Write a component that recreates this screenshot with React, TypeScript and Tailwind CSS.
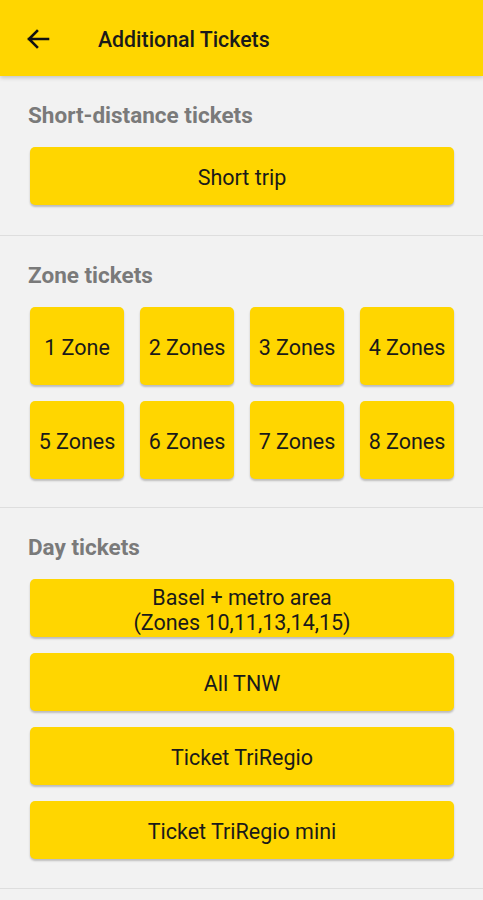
import React from "react";

const btn =
  "flex items-center justify-center bg-[#ffd600] rounded-[5px] shadow-[0_2px_2px_rgba(0,0,0,0.22)] text-[21.5px] text-[#1a1a1a] leading-[24px] pt-[3px]";

function Title({ children }: { children: React.ReactNode }) {
  return (
    <div className="pl-[28px] h-[24px] leading-[24px] text-[22.5px] font-bold text-[#7a7a7a] mb-[20px]">
      {children}
    </div>
  );
}

export default function App() {
  const zones = ["1 Zone", "2 Zones", "3 Zones", "4 Zones", "5 Zones", "6 Zones", "7 Zones", "8 Zones"];
  return (
    <div className="w-[483px] h-[900px] bg-[#f2f2f2] overflow-hidden" style={{ fontFamily: "Roboto, 'Noto Sans', sans-serif" }}>
      <div className="relative z-10 h-[76px] bg-[#ffd600] flex items-center shadow-[0_2px_4px_rgba(0,0,0,0.18)]">
        <svg className="ml-[26px] mt-[2px]" width="24" height="20" viewBox="0 0 24 20">
          <path d="M22 10H3M11 2L3 10l8 8" fill="none" stroke="#111" strokeWidth="2.6" strokeLinecap="square" strokeLinejoin="miter" />
        </svg>
        <div className="ml-[48px] mt-[3px] text-[21.3px] font-medium text-[#1a1a1a]">Additional Tickets</div>
      </div>

      <div className="pt-[27px] pb-[30px] border-b border-[#dedede]">
        <Title>Short-distance tickets</Title>
        <div className="ml-[30px] mr-[29px]">
          <div className={`${btn} h-[58px]`}>Short trip</div>
        </div>
      </div>

      <div className="pt-[27px] pb-[28px] border-b border-[#dedede]">
        <Title>Zone tickets</Title>
        <div className="ml-[30px] mr-[29px] grid grid-cols-4 gap-4">
          {zones.map((z) => (
            <div key={z} className={`${btn} h-[78px]`}>{z}</div>
          ))}
        </div>
      </div>

      <div className="pt-[27px] pb-[29px] border-b border-[#dedede]">
        <Title>Day tickets</Title>
        <div className="ml-[30px] mr-[29px] flex flex-col gap-4">
          <div className={`${btn} h-[58px] flex-col leading-[25px]`}>
            <span>Basel + metro area</span>
            <span>(Zones 10,11,13,14,15)</span>
          </div>
          <div className={`${btn} h-[58px]`}>All TNW</div>
          <div className={`${btn} h-[58px]`}>Ticket TriRegio</div>
          <div className={`${btn} h-[58px]`}>Ticket TriRegio mini</div>
        </div>
      </div>
    </div>
  );
}
